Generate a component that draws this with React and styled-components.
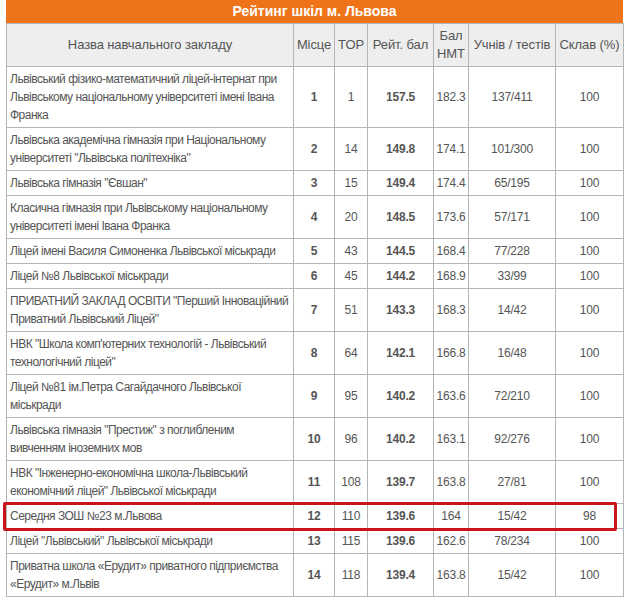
import React from "react";
import styled, { createGlobalStyle } from "styled-components";

const GlobalStyle = createGlobalStyle`
  body {
    margin: 0;
    background: #fff;
    font-family: "Liberation Sans", Arial, sans-serif;
  }
`;

const Wrapper = styled.div`
  padding-left: 6px;
  width: 617px;
`;

const TitleBar = styled.div`
  background: #ef7419;
  color: #fff;
  font-weight: bold;
  font-size: 14px;
  text-align: center;
  height: 23px;
  line-height: 22px;
`;

const Table = styled.table`
  width: 617px;
  table-layout: fixed;
  border-collapse: collapse;
  font-size: 12px;
  letter-spacing: -0.5px;
  color: #555;
`;

const HeadCell = styled.th`
  background: #eeeeee;
  border: 1px solid #b5b5b5;
  font-weight: normal;
  font-size: 13px;
  letter-spacing: -0.1px;
  line-height: 18px;
  padding: 3px 2px;
  text-align: center;
  color: #555;
`;

const Cell = styled.td`
  border: 1px solid #b5b5b5;
  line-height: 18px;
  padding: 3px 2px;
  text-align: ${(p) => (p.$left ? "left" : "center")};
  font-weight: ${(p) => (p.$bold ? "bold" : "normal")};
  letter-spacing: ${(p) => (p.$left ? "-0.5px" : "-0.2px")};
  vertical-align: middle;
`;

const NameCell = styled(Cell)`
  position: relative;
  padding-left: 3px;

  ${(p) =>
    p.$marked &&
    `
    &::after {
      content: "";
      position: absolute;
      left: -4px;
      top: -2px;
      width: 608px;
      height: calc(100% - 1px);
      border: 3px solid #c8151c;
      border-radius: 2px;
      pointer-events: none;
    }
  `}
`;

const widths = [287, 41, 33, 66, 35, 87, 68];

const rows = [
  ["Львівський фізико-математичний ліцей-інтернат при Львівському національному університеті імені Івана Франка", 1, 1, "157.5", "182.3", "137/411", 100],
  ["Львівська академічна гімназія при Національному університеті \"Львівська політехніка\"", 2, 14, "149.8", "174.1", "101/300", 100],
  ["Львівська гімназія \"Євшан\"", 3, 15, "149.4", "174.4", "65/195", 100],
  ["Класична гімназія при Львівському національному університеті імені Івана Франка", 4, 20, "148.5", "173.6", "57/171", 100],
  ["Ліцей імені Василя Симоненка Львівської міськради", 5, 43, "144.5", "168.4", "77/228", 100],
  ["Ліцей №8 Львівської міськради", 6, 45, "144.2", "168.9", "33/99", 100],
  ["ПРИВАТНИЙ ЗАКЛАД ОСВІТИ \"Перший Інноваційний Приватний Львівський Ліцей\"", 7, 51, "143.3", "168.3", "14/42", 100],
  ["НВК \"Школа комп'ютерних технологій - Львівський технологічний ліцей\"", 8, 64, "142.1", "166.8", "16/48", 100],
  ["Ліцей №81 ім.Петра Сагайдачного Львівської міськради", 9, 95, "140.2", "163.6", "72/210", 100],
  ["Львівська гімназія \"Престиж\" з поглибленим вивченням іноземних мов", 10, 96, "140.2", "163.1", "92/276", 100],
  ["НВК \"Інженерно-економічна школа-Львівський економічний ліцей\" Львівської міськради", 11, 108, "139.7", "163.8", "27/81", 100],
  ["Середня ЗОШ №23 м.Львова", 12, 110, "139.6", "164", "15/42", 98],
  ["Ліцей \"Львівський\" Львівської міськради", 13, 115, "139.6", "162.6", "78/234", 100],
  ["Приватна школа «Ерудит» приватного підприємства «Ерудит» м.Львів", 14, 118, "139.4", "163.8", "15/42", 100],
];

export default function App() {
  return (
    <Wrapper>
      <GlobalStyle />
      <TitleBar>Рейтинг шкіл м. Львова</TitleBar>
      <Table>
        <colgroup>
          {widths.map((w, i) => (
            <col key={i} style={{ width: w }} />
          ))}
        </colgroup>
        <thead>
          <tr>
            <HeadCell>Назва навчального закладу</HeadCell>
            <HeadCell>Місце</HeadCell>
            <HeadCell>TOP</HeadCell>
            <HeadCell>Рейт. бал</HeadCell>
            <HeadCell>
              Бал
              <br />
              НМТ
            </HeadCell>
            <HeadCell>Учнів / тестів</HeadCell>
            <HeadCell>Склав (%)</HeadCell>
          </tr>
        </thead>
        <tbody>
          {rows.map(([name, place, top, score, nmt, tests, passed]) => (
            <tr key={place}>
              <NameCell $left $marked={place === 12}>
                {name}
              </NameCell>
              <Cell $bold>{place}</Cell>
              <Cell>{top}</Cell>
              <Cell $bold>{score}</Cell>
              <Cell>{nmt}</Cell>
              <Cell>{tests}</Cell>
              <Cell>{passed}</Cell>
            </tr>
          ))}
        </tbody>
      </Table>
    </Wrapper>
  );
}
